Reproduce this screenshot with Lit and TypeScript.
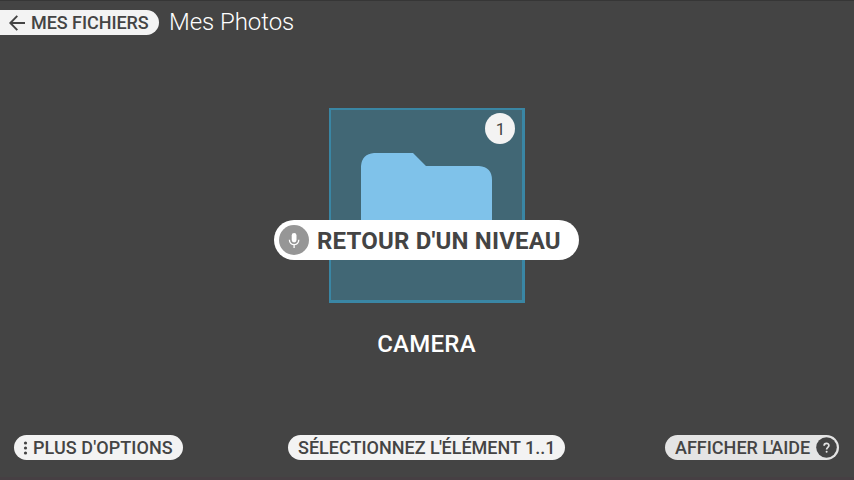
import { LitElement, html, css } from "lit";
import { customElement } from "lit/decorators.js";

@customElement("app-root")
export class AppRoot extends LitElement {
  static styles = css`
    :host {
      display: flex;
      flex-direction: column;
      position: relative;
      box-sizing: border-box;
      width: 854px;
      height: 480px;
      overflow: hidden;
      background: #444;
      border-top: 1px solid #363636;
      border-bottom: 3px solid #463f43;
      color: #fff;
      font-family: Roboto, "Liberation Sans", sans-serif;
      white-space: nowrap;
    }
    svg { display: block; flex: none; }
    header { display: flex; align-items: center; height: 25px; padding-top: 9px; }
    .pill {
      display: flex;
      align-items: center;
      box-sizing: border-box;
      height: 25px;
      border-radius: 13px;
      background: #f3f3f3;
      color: #444;
      font-size: 18px;
      font-weight: 500;
      line-height: 25px;
    }
    .back { width: 159px; padding-left: 9px; gap: 6px; border-radius: 0 13px 13px 0; letter-spacing: -0.05px; }
    h1 { margin: 0 0 0 10px; font-size: 24px; font-weight: 300; line-height: 25px; letter-spacing: -0.05px; }
    main { flex: 1; display: flex; flex-direction: column; align-items: center; padding-top: 73px; }
    .tile {
      box-sizing: border-box;
      display: flex;
      flex-direction: column;
      width: 196px;
      height: 195px;
      background: #416775;
      border: solid #3a86a4;
      border-width: 2px 3px 3px 2px;
    }
    .badge {
      box-sizing: border-box;
      align-self: flex-end;
      margin: 3px 7px 0 0;
      padding-left: 1px;
      width: 30px;
      height: 31px;
      border-radius: 50%;
      background: #f3f3f3;
      color: #444;
      font-size: 17px;
      line-height: 33px;
      text-align: center;
    }
    .folder { margin: 9px 0 0 30px; }
    .name { margin-top: 26px; padding-right: 1px; font-size: 24px; font-weight: 500; line-height: 30px; letter-spacing: 0.25px; }
    .prompt {
      position: absolute;
      left: 274px;
      top: 219px;
      display: flex;
      align-items: center;
      box-sizing: border-box;
      width: 305px;
      height: 40px;
      padding-left: 5px;
      gap: 8px;
      border-radius: 20px;
      background: #fff;
      color: #444;
      font-size: 24px;
      font-weight: 700;
      line-height: 40px;
      letter-spacing: 0.19px;
    }
    .prompt span { padding-top: 2px; }
    footer {
      display: flex;
      justify-content: space-between;
      padding: 0 15px 17px 14px;
    }
    .options { width: 169px; padding-left: 9px; gap: 5px; letter-spacing: 0.07px; }
    .select { width: 277px; padding-left: 10px; margin-left: 5px; }
    .help { width: 174px; padding-left: 10px; gap: 6px; background: #e4e4e4; }
    .elided { letter-spacing: -1.9px; }
    .select .elided { letter-spacing: -0.6px; }
  `;

  render() {
    return html`
      <header>
        <div class="pill back">
          <svg width="16" height="16" viewBox="0 0 16 16" fill="none" stroke="#444" stroke-width="1.9">
            <path d="M16 8H1.5M8.3 0.8 1.3 8l7 7.2" />
          </svg>
          <span>MES FICHIERS</span>
        </div>
        <h1>Mes Photos</h1>
      </header>
      <main>
        <div class="tile">
          <div class="badge">1</div>
          <svg class="folder" width="131" height="107" viewBox="0 0 131 107" fill="#7fc2ea">
            <path d="M13 0H52L65 13H118Q131 14 131 27V94Q131 107 118 107H13Q0 107 0 94V13Q1 1 13 0Z" />
          </svg>
        </div>
        <div class="name">CAMERA</div>
      </main>
      <footer>
        <div class="pill options">
          <svg width="5" height="14" viewBox="0 0 5 14" fill="#444">
            <circle cx="2.5" cy="2" r="1.6" /><circle cx="2.5" cy="7" r="1.6" /><circle cx="2.5" cy="12" r="1.6" />
          </svg>
          <span>PLUS D'OPTIONS</span>
        </div>
        <div class="pill select"><span>SÉLECTIONNEZ <span class="elided">L'</span>ÉLÉMENT 1..1</span></div>
        <div class="pill help">
          <span>AFFICHER <span class="elided">L'</span>AIDE</span>
          <svg width="21" height="21" viewBox="0 0 21 21">
            <circle cx="10.5" cy="10.5" r="10.3" fill="#444" />
            <path d="M8.1 8.7C8.1 5.6 12.9 5.6 12.9 8.5C12.9 10.4 10.6 10.4 10.6 12.6" fill="none" stroke="#e4e4e4" stroke-width="1.7" />
            <circle cx="10.6" cy="14.8" r="1" fill="#e4e4e4" />
          </svg>
        </div>
      </footer>
      <div class="prompt">
        <svg width="30" height="30" viewBox="0 0 30 30">
          <circle cx="15" cy="15" r="15" fill="#969696" />
          <rect x="12.7" y="8" width="4.8" height="9.5" rx="2.4" fill="#fff" />
          <path d="M10.4 14.8C10.4 21.2 19.8 21.2 19.8 14.8M15.1 19.5V23" fill="none" stroke="#fff" stroke-width="1.3" />
        </svg>
        <span>RETOUR D'UN NIVEAU</span>
      </div>
    `;
  }
}
